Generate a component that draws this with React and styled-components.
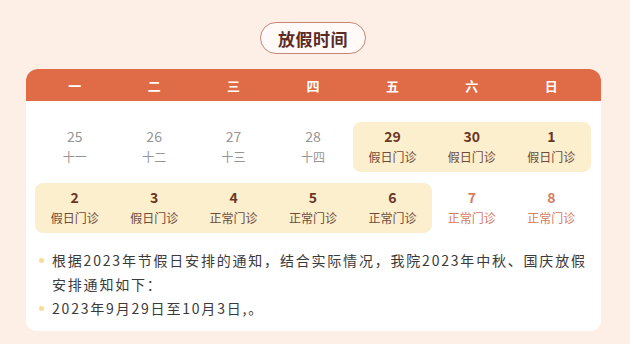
import React from "react";
import styled, { createGlobalStyle } from "styled-components";

const Global = createGlobalStyle`
  html, body {
    margin: 0;
    padding: 0;
    background: #fdeee6;
    font-family: "Noto Sans CJK SC", "Noto Sans", sans-serif;
  }
`;

const Page = styled.div`
  width: 630px;
  height: 344px;
  display: flex;
  flex-direction: column;
  align-items: center;
  padding: 22px 4px 0 0;
  box-sizing: border-box;
`;

const TitlePill = styled.div`
  width: 106px;
  height: 32px;
  box-sizing: border-box;
  border: 1px solid #c48676;
  border-radius: 16px;
  background: #fffaf8;
  display: flex;
  align-items: center;
  justify-content: center;
  font-size: 17px;
  font-weight: 700;
  color: #5b2a25;
  letter-spacing: 0.5px;
`;

const Card = styled.div`
  margin-top: 15px;
  width: 575px;
  margin-left: 1px;
  background: #fff;
  border-radius: 12px 12px 10px 10px;
  overflow: hidden;
  padding-bottom: 11px;
`;

const Grid = styled.div`
  display: grid;
  grid-template-columns: repeat(7, 1fr);
  padding: 0 10px 0 9px;
`;

const Header = styled(Grid)`
  background: #e06b47;
  height: 32px;
  align-items: center;
`;

const DayLabel = styled.div`
  text-align: center;
  color: #fff;
  font-weight: 700;
  font-size: 13px;
`;

const Rows = styled.div`
  display: flex;
  flex-direction: column;
  gap: 11px;
  padding-top: 21px;
`;

const Cell = styled.div`
  height: 50px;
  display: flex;
  flex-direction: column;
  align-items: center;
  justify-content: center;
  gap: 3px;
  padding-bottom: 1px;
  box-sizing: border-box;
  background: ${(p) => (p.$hl ? "#fcefcd" : "transparent")};
  border-radius: ${(p) =>
    `${p.$first ? 8 : 0}px ${p.$last ? 8 : 0}px ${p.$last ? 8 : 0}px ${p.$first ? 8 : 0}px`};
  color: ${(p) => p.$color};
`;

const Num = styled.div`
  font-size: 14px;
  line-height: 18px;
  font-weight: ${(p) => (p.$bold ? 700 : 400)};
`;

const Sub = styled.div`
  font-size: 12px;
  line-height: 18px;
  color: ${(p) => p.$color};
`;

const Notes = styled.ul`
  list-style: none;
  margin: 15px 0 0;
  padding: 0 12px 0 26px;
`;

const Note = styled.li`
  position: relative;
  font-size: 14px;
  line-height: 24px;
  color: #3a3a3a;
  letter-spacing: 1.8px;

  &::before {
    content: "";
    position: absolute;
    left: -13px;
    top: 10px;
    width: 5px;
    height: 5px;
    border-radius: 50%;
    background: #f6dd95;
  }
`;

const days = ["一", "二", "三", "四", "五", "六", "日"];

const GRAY = "#959595";
const BROWN = "#6b3626";
const RED = "#d47b62";

const rows = [
  [
    { n: "25", s: "十一", c: GRAY },
    { n: "26", s: "十二", c: GRAY },
    { n: "27", s: "十三", c: GRAY },
    { n: "28", s: "十四", c: GRAY },
    { n: "29", s: "假日门诊", c: BROWN, hl: true, b: true },
    { n: "30", s: "假日门诊", c: BROWN, hl: true, b: true },
    { n: "1", s: "假日门诊", c: BROWN, hl: true, b: true },
  ],
  [
    { n: "2", s: "假日门诊", c: BROWN, hl: true, b: true },
    { n: "3", s: "假日门诊", c: BROWN, hl: true, b: true },
    { n: "4", s: "正常门诊", c: BROWN, hl: true, b: true },
    { n: "5", s: "正常门诊", c: BROWN, hl: true, b: true },
    { n: "6", s: "正常门诊", c: BROWN, hl: true, b: true },
    { n: "7", s: "正常门诊", c: RED, b: true },
    { n: "8", s: "正常门诊", c: RED, b: true },
  ],
];

const subColor = (d) => (d.c === BROWN ? "#6e4a3c" : d.c);

export default function App() {
  return (
    <Page>
      <Global />
      <TitlePill>放假时间</TitlePill>
      <Card>
        <Header>
          {days.map((d) => (
            <DayLabel key={d}>{d}</DayLabel>
          ))}
        </Header>
        <Rows>
          {rows.map((row, ri) => (
            <Grid key={ri}>
              {row.map((d, i) => (
                <Cell
                  key={i}
                  $hl={d.hl}
                  $first={d.hl && !(row[i - 1] && row[i - 1].hl)}
                  $last={d.hl && !(row[i + 1] && row[i + 1].hl)}
                  $color={d.c}
                >
                  <Num $bold={d.b}>{d.n}</Num>
                  <Sub $color={subColor(d)}>{d.s}</Sub>
                </Cell>
              ))}
            </Grid>
          ))}
        </Rows>
        <Notes>
          <Note>
            根据2023年节假日安排的通知，结合实际情况，我院2023年中秋、国庆放假安排通知如下：
          </Note>
          <Note>2023年9月29日至10月3日,。</Note>
        </Notes>
      </Card>
    </Page>
  );
}
